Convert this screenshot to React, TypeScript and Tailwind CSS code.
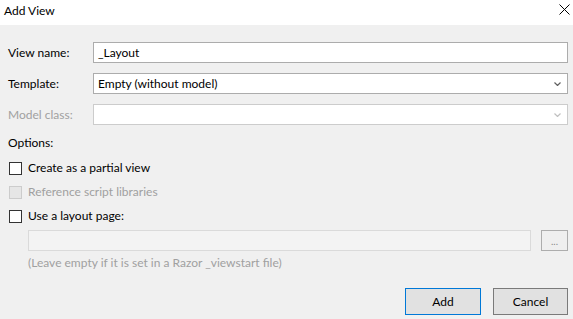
function Chevron({ color }: { color: string }) {
    return (
        <svg width="7" height="4" viewBox="0 0 7 4" className="shrink-0">
            <polyline points="0.5,0.5 3.5,3.5 6.5,0.5" fill="none" stroke={color} strokeWidth="1.2" />
        </svg>
    )
}

function Check({ label, disabled }: { label: string; disabled?: boolean }) {
    return (
        <div className="flex items-center h-[24px]">
            <div
                className={
                    disabled
                        ? "ml-[1px] w-[13px] h-[13px] border border-[#cccccc] bg-[#e6e6e6]"
                        : "ml-[1px] w-[13px] h-[13px] border border-[#333333] bg-white"
                }
            />
            <span className={disabled ? "ml-[6px] text-[#a0a0a0]" : "ml-[6px] text-black"}>{label}</span>
        </div>
    )
}

export default function App() {
    return (
        <div
            className="w-[573px] h-[319px] bg-[#f0f0f0] flex flex-col text-[12px] leading-[16px] text-black overflow-hidden"
            style={{ fontFamily: 'Lato, "Noto Sans", sans-serif' }}
        >
            {/* title bar */}
            <div className="h-[25px] bg-white flex items-center justify-between pl-[4px] pr-[3px]">
                <span className="-mt-[4px]">Add View</span>
                <svg width="11" height="11" viewBox="0 0 11 11" className="-mt-[6px]">
                    <path d="M0.5 0.5 L10.5 10.5 M10.5 0.5 L0.5 10.5" stroke="#000" strokeWidth="1" fill="none" />
                </svg>
            </div>

            <div className="flex flex-col pt-[17px] pl-[8px] pr-[5px]">
                <div className="flex items-center h-[21px]">
                    <span className="w-[85px]">View name:</span>
                    <div className="flex-1 h-full bg-white border border-[#acacac] flex items-center px-[4px]">_Layout</div>
                </div>
                <div className="flex items-center h-[21px] mt-[10px]">
                    <span className="w-[85px]">Template:</span>
                    <div className="flex-1 h-full bg-white border border-[#acacac] flex items-center justify-between pl-[4px] pr-[6px]">
                        <span>Empty (without model)</span>
                        <Chevron color="#606060" />
                    </div>
                </div>
                <div className="flex items-center h-[21px] mt-[10px]">
                    <span className="w-[85px] text-[#a0a0a0]">Model class:</span>
                    <div className="flex-1 h-full bg-white border border-[#cccccc] flex items-center justify-end pr-[6px]">
                        <Chevron color="#c0c0c0" />
                    </div>
                </div>

                <div className="mt-[10px] h-[16px]">Options:</div>

                <div className="mt-[5px] flex flex-col">
                    <Check label="Create as a partial view" />
                    <Check label="Reference script libraries" disabled />
                    <Check label="Use a layout page:" />
                </div>

                <div className="mt-[2px] pl-[20px] flex items-center h-[21px]">
                    <div className="w-[503px] h-full bg-[#f3f3f3] border border-[#dadada]" />
                    <div className="ml-auto w-[27px] h-full border border-[#adadad] bg-[#efefef] flex items-center justify-center text-[#8a8a8a] text-[10px]">
                        ...
                    </div>
                </div>
                <div className="mt-[4px] pl-[20px] h-[16px] text-[#a0a0a0]">
                    (Leave empty if it is set in a Razor _viewstart file)
                </div>

                <div className="mt-[17px] flex justify-end gap-[12px]">
                    <button className="w-[76px] h-[27px] bg-[#e1e1e1] border border-[#0078d7] text-black">Add</button>
                    <button className="w-[75px] h-[27px] bg-[#e1e1e1] border border-[#7a7a7a] text-black">Cancel</button>
                </div>
            </div>
        </div>
    )
}
